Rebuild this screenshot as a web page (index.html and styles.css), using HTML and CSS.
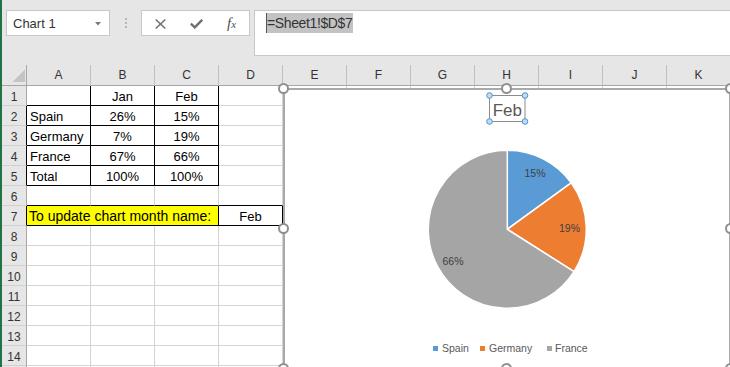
FILE: index.html
```html
<!DOCTYPE html>
<html>
<head>
<meta charset="utf-8">
<title>Excel chart</title>
<link rel="stylesheet" href="styles.css">
</head>
<body>
<div class="app">
  <div class="toolbar">
    <div class="namebox"><span>Chart 1</span><svg class="dd" width="6" height="4" viewBox="0 0 6 4"><path d="M0 0H6L3 3.5Z"/></svg></div>
    <div class="grip"><i></i><i></i><i></i></div>
    <div class="fbtns">
      <svg class="ico" width="11" height="10" viewBox="0 0 11 10"><path d="M0.7 0.5L10.3 9.5M10.3 0.5L0.7 9.5"/></svg>
      <svg class="ico chk" width="13" height="10" viewBox="0 0 13 10"><path d="M0.8 4.6L4.8 8.4L12.2 0.8"/></svg>
      <span class="fx">f<span class="fxs">x</span></span>
    </div>
    <div class="fbar"><span class="sel">=Sheet1!$D$7</span></div>
  </div>
  <table class="sheet">
    <colgroup><col class="rhc"><col class="cc"><col class="cc"><col class="cc"><col class="cc"><col class="cc"><col class="cc"><col class="cc"><col class="cc"><col class="cc"><col class="cc"><col class="cc"></colgroup>
    <thead>
      <tr><th class="corner"></th><th>A</th><th>B</th><th>C</th><th>D</th><th>E</th><th>F</th><th>G</th><th>H</th><th>I</th><th>J</th><th>K</th></tr>
    </thead>
    <tbody>
      <tr><th>1</th><td class="k"></td><td class="k c">Jan</td><td class="k c">Feb</td><td></td><td></td><td></td><td></td><td></td><td></td><td></td><td></td></tr>
      <tr><th class="rk">2</th><td class="k">Spain</td><td class="k c">26%</td><td class="k c">15%</td><td></td><td></td><td></td><td></td><td></td><td></td><td></td><td></td></tr>
      <tr><th class="rk">3</th><td class="k">Germany</td><td class="k c">7%</td><td class="k c">19%</td><td></td><td></td><td></td><td></td><td></td><td></td><td></td><td></td></tr>
      <tr><th class="rk">4</th><td class="k">France</td><td class="k c">67%</td><td class="k c">66%</td><td></td><td></td><td></td><td></td><td></td><td></td><td></td><td></td></tr>
      <tr><th class="rk">5</th><td class="k">Total</td><td class="k c">100%</td><td class="k c">100%</td><td></td><td></td><td></td><td></td><td></td><td></td><td></td><td></td></tr>
      <tr><th>6</th><td class="kb"></td><td class="kb"></td><td class="kb"></td><td class="kb"></td><td></td><td></td><td></td><td></td><td></td><td></td><td></td></tr>
      <tr><th class="rk">7</th><td class="k yel" colspan="3">To update chart month name:</td><td class="k c">Feb</td><td></td><td></td><td></td><td></td><td></td><td></td><td></td></tr>
      <tr><th>8</th><td></td><td></td><td></td><td></td><td></td><td></td><td></td><td></td><td></td><td></td><td></td></tr>
      <tr><th>9</th><td></td><td></td><td></td><td></td><td></td><td></td><td></td><td></td><td></td><td></td><td></td></tr>
      <tr><th>10</th><td></td><td></td><td></td><td></td><td></td><td></td><td></td><td></td><td></td><td></td><td></td></tr>
      <tr><th>11</th><td></td><td></td><td></td><td></td><td></td><td></td><td></td><td></td><td></td><td></td><td></td></tr>
      <tr><th>12</th><td></td><td></td><td></td><td></td><td></td><td></td><td></td><td></td><td></td><td></td><td></td></tr>
      <tr><th>13</th><td></td><td></td><td></td><td></td><td></td><td></td><td></td><td></td><td></td><td></td><td></td></tr>
      <tr><th>14</th><td></td><td></td><td></td><td></td><td></td><td></td><td></td><td></td><td></td><td></td><td></td></tr>
      <tr><th></th><td></td><td></td><td></td><td></td><td></td><td></td><td></td><td></td><td></td><td></td><td></td></tr>
    </tbody>
  </table>
</div>

<div class="chart">
  <svg class="plot" width="448" height="281" viewBox="283 88 448 281">
    <path class="s1" d="M507.3 229.3L507.3 150.3A79 79 0 0 1 571.2 182.86Z"/>
    <path class="s2" d="M507.3 229.3L571.2 182.86A79 79 0 0 1 574 271.6Z"/>
    <path class="s3" d="M507.3 229.3L574 271.6A79 79 0 1 1 507.3 150.3Z"/>
    <text class="dl" x="535" y="177">15%</text>
    <text class="dl" x="569.5" y="232">19%</text>
    <text class="dl" x="453" y="265">66%</text>
    <rect class="tbox" x="489.5" y="95.5" width="35.5" height="26"/>
    <text class="title" x="507.3" y="115.5">Feb</text>
    <circle class="th" cx="489.5" cy="95.5" r="2.8"/>
    <circle class="th" cx="525" cy="95.5" r="2.8"/>
    <circle class="th" cx="489.5" cy="121.5" r="2.8"/>
    <circle class="th" cx="525" cy="121.5" r="2.8"/>
    <rect class="l1" x="433" y="346" width="5" height="5"/>
    <text class="lg" x="442" y="352">Spain</text>
    <rect class="l2" x="480" y="346" width="5" height="5"/>
    <text class="lg" x="489" y="352">Germany</text>
    <rect class="l3" x="547" y="346" width="5" height="5"/>
    <text class="lg" x="555" y="352">France</text>
  </svg>
  <span class="h tl"></span><span class="h tm"></span><span class="h tr"></span>
  <span class="h ml"></span><span class="h mr"></span>
  <span class="h bl"></span><span class="h bm"></span><span class="h br"></span>
</div>
</body>
</html>
```

FILE: styles.css
```css
html, body {
  margin: 0;
  padding: 0;
  overflow: hidden;
  background: #ffffff;
}

.app {
  border-left: 2px solid #217346;
  width: 728px;
  height: 367px;
  overflow: hidden;
  font-family: "Liberation Sans", Arial, sans-serif;
}

.toolbar {
  height: 65px;
  box-sizing: border-box;
  background: #e6e6e6;
  display: flex;
  align-items: flex-start;
  padding: 10px 0 0 4px;
}

.namebox {
  box-sizing: border-box;
  width: 104px;
  height: 26px;
  background: #ffffff;
  border: 1px solid #c8c8c8;
  display: flex;
  align-items: center;
  justify-content: space-between;
  padding: 1px 8px 0 6px;
  font-size: 13px;
  color: #333333;
}

.dd path { fill: #7a7a7a; }

.grip {
  margin: 8px 14px 0 15px;
  display: flex;
  flex-direction: column;
  gap: 2px;
}
.grip i {
  display: block;
  width: 2px;
  height: 2px;
  background: #b4b4b4;
}

.fbtns {
  box-sizing: border-box;
  width: 109px;
  height: 26px;
  background: #ffffff;
  border: 1px solid #c8c8c8;
  display: flex;
  align-items: center;
  padding: 1px 0 0 13px;
  gap: 24px;
}
.ico path {
  fill: none;
  stroke: #707070;
  stroke-width: 1.5;
}
.chk path { stroke-width: 2.4; }
.fx {
  font-family: "Liberation Serif", "Times New Roman", serif;
  font-style: italic;
  font-size: 15px;
  color: #505050;
  line-height: 15px;
}
.fxs { font-size: 11px; }

.fbar {
  box-sizing: border-box;
  flex: 1;
  height: 46px;
  margin: 0 -20px 0 4px;
  background: #ffffff;
  border: 1px solid #c8c8c8;
  padding: 2px 0 0 11px;
}
.sel {
  display: inline-block;
  background: #c3c3c3;
  border-left: 1px solid #555555;
  line-height: 20px;
  font-size: 14px;
  letter-spacing: -0.38px;
  color: #333333;
  padding-right: 1px;
}

.sheet {
  border-collapse: separate;
  border-spacing: 0;
  table-layout: fixed;
  width: 729px;
}
.rhc { width: 25px; }
.cc { width: 64px; }

.sheet th, .sheet td {
  box-sizing: border-box;
  padding: 0;
  white-space: nowrap;
  overflow: hidden;
}

.sheet thead tr { height: 21px; }
.sheet thead th {
  background: #e6e6e6;
  border-right: 1px solid #c0c0c0;
  border-bottom: 1px solid #a6a6a6;
  font-weight: normal;
  font-size: 12px;
  color: #333333;
  text-align: center;
  line-height: 20px;
  vertical-align: top;
}
.sheet thead th.corner {
  border-right-color: #a6a6a6;
  background: linear-gradient(to bottom right, transparent 50%, #c4c4c4 50%) no-repeat right 1px bottom 3px / 13px 13px, #e6e6e6;
}

.sheet tbody tr { height: 20px; }
.sheet tbody th {
  background: #e6e6e6;
  border-right: 1px solid #a6a6a6;
  border-bottom: 1px solid #d0d0d0;
  font-weight: normal;
  font-size: 12px;
  color: #333333;
  text-align: center;
  vertical-align: top;
  padding-top: 3px;
  line-height: 16px;
}
.sheet tbody th.rk { border-right-color: #000000; }

.sheet td {
  background: #ffffff;
  border-right: 1px solid #d4d4d4;
  border-bottom: 1px solid #d4d4d4;
  font-size: 13px;
  color: #000000;
  vertical-align: top;
  padding: 2px 0 0 3px;
  line-height: 17px;
}
.sheet td.k { border-right-color: #000000; border-bottom-color: #000000; }
.sheet td.kb { border-bottom-color: #000000; }
.sheet td.c { text-align: center; padding-left: 0; }
.sheet td.yel {
  background: #ffff00;
  font-size: 14px;
  padding-left: 2px;
}

.chart {
  position: absolute;
  left: 283px;
  top: 88px;
  width: 448px;
  height: 281px;
  box-sizing: border-box;
  border: 2px solid #a9a9a9;
  background: #ffffff;
}
.plot {
  position: absolute;
  left: -2px;
  top: -2px;
  font-family: "Liberation Sans", Arial, sans-serif;
}
.s1, .s2, .s3 {
  stroke: #ffffff;
  stroke-width: 1.5;
  stroke-linejoin: round;
}
.s1, .l1 { fill: #5b9bd5; }
.s2, .l2 { fill: #ed7d31; }
.s3, .l3 { fill: #a5a5a5; }
.dl {
  font-size: 10.5px;
  fill: #404040;
  text-anchor: middle;
}
.lg {
  font-size: 10.5px;
  fill: #595959;
}
.title {
  font-size: 17px;
  fill: #595959;
  text-anchor: middle;
}
.tbox {
  fill: none;
  stroke: #8c8c8c;
  stroke-width: 1;
}
.th {
  fill: #c5dcf0;
  stroke: #4a90d9;
  stroke-width: 1;
}

.h {
  position: absolute;
  width: 11px;
  height: 11px;
  box-sizing: border-box;
  border: 2px solid #8f8f8f;
  border-radius: 50%;
  background: #ffffff;
}
.tl { left: -7px; top: -7px; }
.tm { left: 216px; top: -7px; }
.tr { right: -7px; top: -7px; }
.ml { left: -7px; top: 133px; }
.mr { right: -7px; top: 133px; }
.bl { left: -7px; bottom: -7px; }
.bm { left: 216px; bottom: -7px; }
.br { right: -7px; bottom: -7px; }
```
